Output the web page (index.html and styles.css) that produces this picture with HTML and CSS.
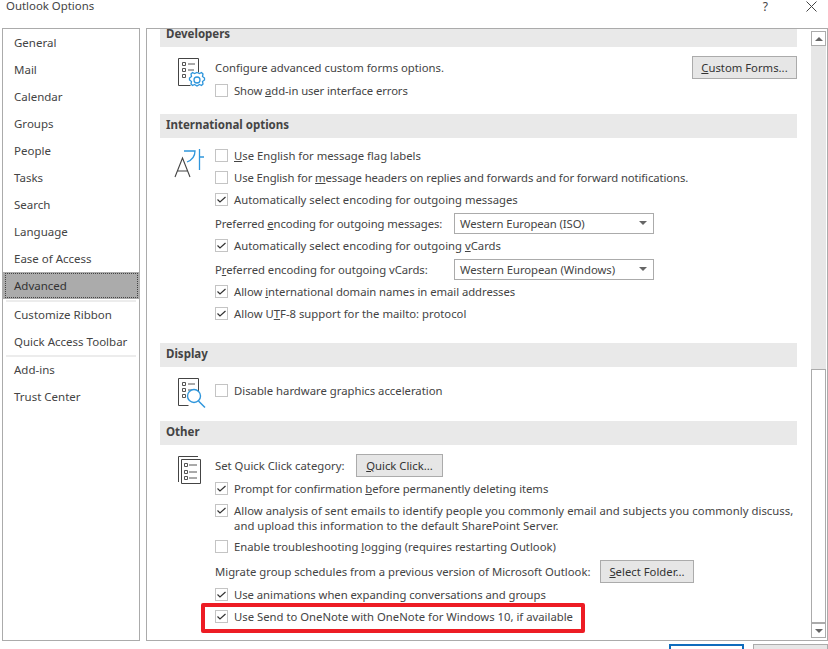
FILE: index.html
```html
<!DOCTYPE html>
<html lang="en">
<head>
<meta charset="utf-8">
<title>Outlook Options</title>
<link rel="stylesheet" href="styles.css">
</head>
<body>
<div class="dialog">
  <header class="titlebar">
    <span class="title">Outlook Options</span>
    <span class="help">?</span>
    <svg class="close" width="11" height="11" viewBox="0 0 11 11"><path d="M.5 .5l10 10M10.500 .5l-10 10" stroke="#444" stroke-width="1" fill="none"/></svg>
  </header>
  <div class="main">
    <nav class="side">
      <div class="nav-group">
        <div class="nav">General</div>
        <div class="nav">Mail</div>
        <div class="nav">Calendar</div>
        <div class="nav">Groups</div>
        <div class="nav">People</div>
        <div class="nav">Tasks</div>
        <div class="nav">Search</div>
        <div class="nav">Language</div>
        <div class="nav">Ease of Access</div>
        <div class="nav active"><span class="focus">Advanced</span></div>
      </div>
      <div class="nav-group sep">
        <div class="nav">Customize Ribbon</div>
        <div class="nav">Quick Access Toolbar</div>
      </div>
      <div class="nav-group sep">
        <div class="nav">Add-ins</div>
        <div class="nav">Trust Center</div>
      </div>
    </nav>
    <section class="panel">
      <div class="content">
        <h2 class="bar bar-dev">Developers</h2>
        <div class="group group-dev">
          <svg class="icon" width="30" height="32" viewBox="0 0 30 32">
            <path d="M.5 2.500h20v14M.5 2.500v27h12" fill="#fff" stroke="#444"/>
            <path d="M4.500 6.500h3v3h-3zM4.500 12.500h3v3h-3zM4.500 18.500h3v3h-3z" fill="none" stroke="#555"/>
            <path d="M10 8h7M10 14h6" stroke="#555"/>
            <g transform="translate(0 2)">
              <path d="M19 14.500l2.500 1 2-1 1.500 1.500-.5 2.500 2 1.500v2l-2 1.500.5 2.500-1.500 1.500-2-1-2.500 1.500-2.500-1.500-2 1-1.500-1.500.5-2.500-2-1.500v-2l2-1.500-.5-2.500 1.500-1.500 2 1z" fill="#fff" stroke="#2f96dc" stroke-width="1.300"/>
              <circle cx="19" cy="22" r="3" fill="none" stroke="#2f96dc" stroke-width="1.300"/>
            </g>
          </svg>
          <div class="rows">
            <div class="row r-config">
              <span class="text">Configure advanced custom forms options.</span>
              <button class="btn btn-forms"><u>C</u>ustom Forms...</button>
            </div>
            <label class="check r-show"><span class="box"></span><span class="tight">Show <u>a</u>dd-in user interface errors</span></label>
          </div>
        </div>
        <h2 class="bar">International options</h2>
        <div class="group group-intl">
          <svg class="icon icon-intl" width="30" height="34" viewBox="0 0 30 34">
            <path d="M1 33L8.500 14 16 33M3.500 27h10" fill="none" stroke="#444" stroke-width="1.100"/>
            <path d="M10 7h11c0 5-3 9-8 11M25.500 5v21M26 13h4" fill="none" stroke="#2f96dc" stroke-width="1.300"/>
          </svg>
          <div class="rows">
            <label class="check"><span class="box"></span><span><u>U</u>se English for message flag labels</span></label>
            <label class="check"><span class="box"></span><span class="tight">Use English for <u>m</u>essage headers on replies and forwards and for forward notifications.</span></label>
            <label class="check"><span class="box on"><svg width="9" height="7" viewBox="0 0 9 7"><path d="M.5 3.500l2.500 2.500 5.500-5" fill="none" stroke="#333" stroke-width="1.200"/></svg></span><span>Automatically select encoding for outgoing messages</span></label>
            <div class="row enc">
              <span class="enc-label"><span class="tight">Preferred <u>e</u>ncoding for outgoing messages:</span></span>
              <div class="select"><span class="tight">Western European (ISO)</span><i class="caret"></i></div>
            </div>
            <label class="check"><span class="box on"><svg width="9" height="7" viewBox="0 0 9 7"><path d="M.5 3.500l2.500 2.500 5.500-5" fill="none" stroke="#333" stroke-width="1.200"/></svg></span><span>Automatically select encoding for outgoing <u>v</u>Cards</span></label>
            <div class="row enc">
              <span class="enc-label"><span class="slim">P<u>r</u>eferred encoding for outgoing vCards:</span></span>
              <div class="select"><span class="slim">Western European (Windows)</span><i class="caret"></i></div>
            </div>
            <label class="check"><span class="box on"><svg width="9" height="7" viewBox="0 0 9 7"><path d="M.5 3.500l2.500 2.500 5.500-5" fill="none" stroke="#333" stroke-width="1.200"/></svg></span><span class="slim">Allow <u>i</u>nternational domain names in email addresses</span></label>
            <label class="check"><span class="box on"><svg width="9" height="7" viewBox="0 0 9 7"><path d="M.5 3.500l2.500 2.500 5.500-5" fill="none" stroke="#333" stroke-width="1.200"/></svg></span><span>Allow U<u>T</u>F-8 support for the mailto: protocol</span></label>
          </div>
        </div>
        <h2 class="bar">Display</h2>
        <div class="group group-display">
          <svg class="icon icon-display" width="30" height="32" viewBox="0 0 30 32">
            <path d="M.5 .5h20v14M.5 .5v27h10" fill="#fff" stroke="#444"/>
            <path d="M4.500 4.500h3v3h-3zM4.500 10.500h3v3h-3zM4.500 16.500h3v3h-3z" fill="none" stroke="#555"/>
            <path d="M10 6h7M10 12h4" stroke="#555"/>
            <circle cx="16" cy="18" r="6.500" fill="#fff" stroke="#2f96dc" stroke-width="1.400"/>
            <path d="M20.500 23l6.500 6.500" stroke="#2f96dc" stroke-width="1.500"/>
          </svg>
          <div class="rows">
            <label class="check"><span class="box"></span><span>Disable hardware graphics acceleration</span></label>
          </div>
        </div>
        <h2 class="bar">Other</h2>
        <div class="group group-other">
          <svg class="icon icon-other" width="24" height="30" viewBox="0 0 24 30">
            <path d="M.5 26V.5H20" fill="none" stroke="#444"/>
            <path d="M3.500 27.500v-24h19v24z" fill="#fff" stroke="#444"/>
            <path d="M6.500 7.500h3v3h-3zM6.500 14.500h3v3h-3zM6.500 20.500h3v3h-3z" fill="none" stroke="#555"/>
            <path d="M11 9h8M11 16h8M11 22h8" stroke="#555"/>
          </svg>
          <div class="rows">
            <div class="row r-quick">
              <span class="text q-label">Set Quick Click category:</span>
              <button class="btn"><u>Q</u>uick Click...</button>
            </div>
            <label class="check"><span class="box on"><svg width="9" height="7" viewBox="0 0 9 7"><path d="M.5 3.500l2.500 2.500 5.500-5" fill="none" stroke="#333" stroke-width="1.200"/></svg></span><span class="slim">Prompt for confirmation <u>b</u>efore permanently deleting items</span></label>
            <label class="check tall"><span class="box on"><svg width="9" height="7" viewBox="0 0 9 7"><path d="M.5 3.500l2.500 2.500 5.500-5" fill="none" stroke="#333" stroke-width="1.200"/></svg></span><span class="wide">Allow analysis of sent emails to identify people you commonly email and subjects you commonly discuss,<br>and upload this information to the default SharePoint Server.</span></label>
            <label class="check"><span class="box"></span><span>Enable troubleshooting <u>l</u>ogging (requires restarting Outlook)</span></label>
            <div class="row r-migrate">
              <span class="text m-label">Migrate group schedules from a previous version of Microsoft Outlook:</span>
              <button class="btn btn-folder"><u>S</u>elect Folder...</button>
            </div>
            <label class="check"><span class="box on"><svg width="9" height="7" viewBox="0 0 9 7"><path d="M.5 3.500l2.500 2.500 5.500-5" fill="none" stroke="#333" stroke-width="1.200"/></svg></span><span class="slim">Use animations when expanding conversations and groups</span></label>
            <label class="check"><span class="box on"><svg width="9" height="7" viewBox="0 0 9 7"><path d="M.5 3.500l2.500 2.500 5.500-5" fill="none" stroke="#333" stroke-width="1.200"/></svg></span><span>Use Send to OneNote with OneNote for Windows 10, if available</span></label>
          </div>
        </div>
      </div>
      <div class="scrollbar">
        <div class="arrow"><i class="tri up"></i></div>
        <div class="track"></div>
        <div class="thumb"></div>
        <div class="arrow"><i class="tri down"></i></div>
      </div>
      <div class="highlight"></div>
    </section>
  </div>
  <footer class="foot">
    <div class="foot-btn ok"></div>
    <div class="foot-btn cancel"></div>
  </footer>
</div>
</body>
</html>
```
FILE: styles.css
```css
* { box-sizing: border-box; }
html, body { margin: 0; padding: 0; background: #fff; }
body { width: 828px; height: 649px; overflow: hidden; font-family: "Noto Sans", "Open Sans", sans-serif; font-size: 11.3px; color: #444; }
.dialog { width: 828px; height: 649px; display: flex; flex-direction: column; }
.titlebar { height: 28px; display: flex; padding-left: 6px; flex: none; }
.title { font-size: 11.4px; line-height: 12px; color: #444; }
.help { margin-left: auto; font-size: 12px; line-height: 13px; margin-right: 38px; }
.close { margin: 1px 11px 0 0; }
.main { display: flex; height: 613px; flex: none; padding-left: 2px; }
.side { width: 138px; border: 1px solid #ababab; flex: none; }
.nav { height: 27px; line-height: 27px; padding-left: 11px; font-size: 11.5px; white-space: nowrap; }
.nav.active { background: #ababab; padding: 1px 0 0 2px; color: #333; line-height: 25px; }
.focus { display: block; height: 25px; border: 1px dotted #444; padding-left: 8px; line-height: 23px; width: 133px; }
.sep { border-top: 2px solid #ececec; margin: 1px 3px 0; }
.sep .nav { padding-left: 8px; line-height: 25px; }
.sep + .sep { margin-top: -1px; }
.panel { position: relative; width: 682px; margin-left: 6px; border: 1px solid #ababab; display: flex; }
.content { width: 664px; padding-left: 13px; }
.bar { width: 637px; margin: 0; background: #e9e9e9; font-size: 11.5px; font-weight: 700; color: #444; padding-left: 6px; height: 24px; line-height: 22px; }
.bar-dev { height: 18px; line-height: 10px; }
.group { display: flex; }
.group-dev { height: 67px; padding-top: 9px; }
.group-intl { height: 205px; padding-top: 6px; }
.group-display { height: 54px; padding-top: 12px; }
.group-other { padding-top: 8px; }
.icon { flex: none; margin-left: 18px; }
.icon-intl { margin-left: 14px; }
.icon-display { margin-top: -1px; }
.icon-other { margin-top: 3px; }
.rows { margin-left: 7px; width: 582px; display: flex; flex-direction: column; flex: none; }
.icon-intl + .rows { margin-left: 11px; }
.icon-other + .rows { margin-left: 13px; }
.row { display: flex; align-items: center; white-space: nowrap; }
.check { display: flex; align-items: center; height: 22px; white-space: nowrap; }
.tight { letter-spacing: -.1px; }
.slim { letter-spacing: -.045px; }
.wide { letter-spacing: .04px; }
.box { width: 13px; height: 13px; border: 1px solid #c4c4c4; margin-right: 6px; flex: none; display: flex; align-items: center; justify-content: center; background: #fff; }
.check.tall { height: 36px; padding-top: 4px; align-items: flex-start; line-height: 15px; }
.check.tall .box { margin-top: 1px; }
.r-config { height: 22px; justify-content: space-between; }
.r-show { margin-top: 1px; }
.btn { font: inherit; color: #333; background: #e6e6e6; border: 1px solid #ababab; height: 23px; margin-top: 1px; padding: 0; border-radius: 0; width: 87px; }
.btn-forms { width: 105px; }
.btn-folder { width: 94px; }
.q-label { width: 141px; }
.m-label { width: 385px; }
.r-quick { height: 24px; }
.r-migrate { height: 26px; padding-top: 2px; }
.enc { height: 22px; margin-top: 2px; }
.enc-label { width: 239px; }
.select { width: 200px; height: 21px; border: 1px solid #ababab; display: flex; align-items: center; padding: 0 6px 0 5px; justify-content: space-between; background: #fff; }
.caret { width: 0; height: 0; border-left: 4px solid transparent; border-right: 4px solid transparent; border-top: 4px solid #666; }
.scrollbar { position: relative; width: 15px; margin: 2px 0 2px; display: flex; flex-direction: column; background: #e6e6e6; }
.arrow { height: 15px; background: #fff; border: 1px solid #ababab; display: flex; align-items: center; justify-content: center; flex: none; }
.track { flex: 1; }
.thumb { position: absolute; left: 0; right: 0; top: 338px; bottom: 15px; background: #fff; border: 1px solid #ababab; }
.tri { width: 0; height: 0; border-left: 4px solid transparent; border-right: 4px solid transparent; }
.tri.up { border-bottom: 4px solid #666; }
.tri.down { border-top: 4px solid #666; }
.highlight { position: absolute; left: 54px; top: 574px; width: 384px; height: 30px; border: 4px solid #ed1c24; border-radius: 2px; pointer-events: none; }
.foot { display: flex; flex: 1; padding: 3px 0 0 669px; gap: 9px; }
.foot-btn { height: 10px; background: #e6e6e6; border: 1px solid #ababab; }
.ok { width: 75px; border: 2px solid #0f6cbd; background: #fff; }
.cancel { width: 75px; }
```
